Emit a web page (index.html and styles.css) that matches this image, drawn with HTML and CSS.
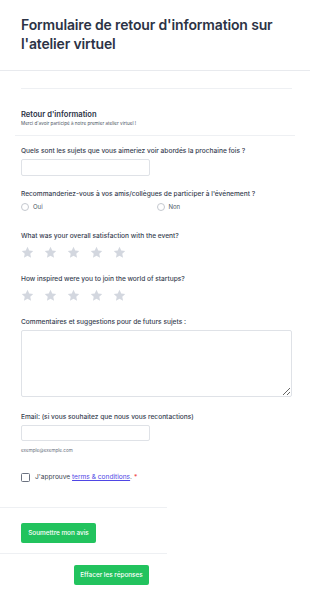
FILE: index.html
```html
<!doctype html>
<html lang="fr">
    <head>
        <meta charset="UTF-8" />
        <meta name="viewport" content="width=device-width, initial-scale=1.0" />
        <title>Formulaire de retour d'information</title>
        <link rel="stylesheet" href="styles.css">
    </head>
    <body>
        <header class="page-header">
            <h1>Formulaire de retour d'information sur l'atelier virtuel</h1>
        </header>

        <form class="form">
            <div class="section-head">
                <h2>Retour d'information</h2>
                <p>Merci d'avoir participé à notre premier atelier virtuel !</p>
            </div>

            <div class="field">
                <label class="field-label">Quels sont les sujets que vous aimeriez voir abordés la prochaine fois ?</label>
                <input type="text" class="input">
            </div>

            <div class="field">
                <label class="field-label">Recommanderiez-vous à vos amis/collègues de participer à l'événement ?</label>
                <div class="radio-group">
                    <label class="radio"><span class="radio-dot"></span>Oui</label>
                    <label class="radio"><span class="radio-dot"></span>Non</label>
                </div>
            </div>

            <div class="field field-rating">
                <label class="field-label">What was your overall satisfaction with the event?</label>
                <div class="stars">
                    <svg viewBox="0 0 24 24"><path d="M12 1.5l3.2 6.9 7.4.8-5.5 5.1 1.5 7.4L12 17.9l-6.6 3.8 1.5-7.4-5.5-5.1 7.4-.8z"/></svg>
                    <svg viewBox="0 0 24 24"><path d="M12 1.5l3.2 6.9 7.4.8-5.5 5.1 1.5 7.4L12 17.9l-6.6 3.8 1.5-7.4-5.5-5.1 7.4-.8z"/></svg>
                    <svg viewBox="0 0 24 24"><path d="M12 1.5l3.2 6.9 7.4.8-5.5 5.1 1.5 7.4L12 17.9l-6.6 3.8 1.5-7.4-5.5-5.1 7.4-.8z"/></svg>
                    <svg viewBox="0 0 24 24"><path d="M12 1.5l3.2 6.9 7.4.8-5.5 5.1 1.5 7.4L12 17.9l-6.6 3.8 1.5-7.4-5.5-5.1 7.4-.8z"/></svg>
                    <svg viewBox="0 0 24 24"><path d="M12 1.5l3.2 6.9 7.4.8-5.5 5.1 1.5 7.4L12 17.9l-6.6 3.8 1.5-7.4-5.5-5.1 7.4-.8z"/></svg>
                </div>
            </div>

            <div class="field field-rating">
                <label class="field-label">How inspired were you to join the world of startups?</label>
                <div class="stars">
                    <svg viewBox="0 0 24 24"><path d="M12 1.5l3.2 6.9 7.4.8-5.5 5.1 1.5 7.4L12 17.9l-6.6 3.8 1.5-7.4-5.5-5.1 7.4-.8z"/></svg>
                    <svg viewBox="0 0 24 24"><path d="M12 1.5l3.2 6.9 7.4.8-5.5 5.1 1.5 7.4L12 17.9l-6.6 3.8 1.5-7.4-5.5-5.1 7.4-.8z"/></svg>
                    <svg viewBox="0 0 24 24"><path d="M12 1.5l3.2 6.9 7.4.8-5.5 5.1 1.5 7.4L12 17.9l-6.6 3.8 1.5-7.4-5.5-5.1 7.4-.8z"/></svg>
                    <svg viewBox="0 0 24 24"><path d="M12 1.5l3.2 6.9 7.4.8-5.5 5.1 1.5 7.4L12 17.9l-6.6 3.8 1.5-7.4-5.5-5.1 7.4-.8z"/></svg>
                    <svg viewBox="0 0 24 24"><path d="M12 1.5l3.2 6.9 7.4.8-5.5 5.1 1.5 7.4L12 17.9l-6.6 3.8 1.5-7.4-5.5-5.1 7.4-.8z"/></svg>
                </div>
            </div>

            <div class="field">
                <label class="field-label">Commentaires et suggestions pour de futurs sujets :</label>
                <textarea class="textarea"></textarea>
            </div>

            <div class="field field-email">
                <label class="field-label">Email: (si vous souhaitez que nous vous recontactions)</label>
                <input type="email" class="input input-email">
                <div class="hint">exemple@exemple.com</div>
            </div>

            <label class="terms">
                <span class="checkbox"></span>
                J'approuve&nbsp;<a href="#">terms &amp; conditions</a>.&nbsp;<span class="required">*</span>
            </label>

            <div class="actions">
                <button type="submit" class="btn">Soumettre mon avis</button>
            </div>
            <div class="actions actions-reset">
                <button type="reset" class="btn">Effacer les réponses</button>
            </div>
        </form>
    </body>
</html>
```

FILE: styles.css
```css
* {
    margin: 0;
    padding: 0;
    box-sizing: border-box;
}

body {
    font-family: Inter, "Noto Sans", sans-serif;
    color: #374151;
    background: #fff;
}

.page-header {
    padding: 15px 18px 17px 21px;
    border-bottom: 1px solid #e8eaee;
}

.page-header h1 {
    font-size: 14px;
    line-height: 19px;
    font-weight: 600;
    letter-spacing: -0.15px;
    color: #2c3345;
}

.form {
    padding: 17px 18px 0 21px;
}

.section-head {
    border-top: 1px solid #eef0f3;
    padding-top: 21px;
}

.section-head h2 {
    font-size: 7.6px;
    line-height: 10px;
    font-weight: 600;
    color: #2c3345;
}

.section-head p {
    font-size: 4.6px;
    line-height: 7px;
    color: #4b5563;
}

.section-head::after {
    content: "";
    display: block;
    height: 1px;
    background: #eef0f3;
    margin: 8px -3px 0 -6px;
}

.field {
    margin-top: 11px;
}

.field + .field {
    margin-top: 14px;
}

.field + .field-rating {
    margin-top: 21px;
}

.field-rating + .field-rating {
    margin-top: 15px;
}

.field-rating + .field {
    margin-top: 16px;
}

.field + .field-email {
    margin-top: 16px;
}

.field-label {
    display: block;
    font-size: 6.6px;
    line-height: 9px;
    font-weight: 500;
    color: #374151;
    margin-bottom: 3px;
}

.input {
    display: block;
    width: 129px;
    height: 17px;
    border: 1px solid #dfe2e7;
    border-radius: 2px;
    background: #fff;
}

.input-email {
    height: 16px;
}

.textarea {
    display: block;
    width: 100%;
    height: 67px;
    border: 1px solid #dfe2e7;
    border-radius: 2px;
    resize: vertical;
}

.hint {
    font-size: 4.6px;
    line-height: 7px;
    color: #6b7280;
    margin-top: 6px;
}

.radio-group {
    display: grid;
    grid-template-columns: 1fr 1fr;
    margin-top: 4px;
}

.radio {
    display: flex;
    align-items: center;
    gap: 4px;
    font-size: 6px;
    line-height: 8px;
    color: #4b5563;
}

.radio-dot {
    width: 8px;
    height: 8px;
    border: 1px solid #c4c8cf;
    border-radius: 50%;
}

.stars {
    display: flex;
    gap: 10px;
    margin-top: 5px;
}

.stars svg {
    width: 13px;
    height: 13px;
    fill: #d3d7df;
}

.terms {
    display: flex;
    align-items: center;
    margin-top: 19px;
    font-size: 6.6px;
    line-height: 9px;
    color: #374151;
}

.checkbox {
    width: 9px;
    height: 9px;
    border: 1px solid #6b7280;
    border-radius: 1.5px;
    margin-right: 5px;
}

.terms a {
    color: #4f46e5;
}

.required {
    color: #ef4444;
}

.actions {
    width: 167px;
    margin-left: -21px;
    margin-top: 25px;
    border-top: 1px solid #eef0f3;
    padding: 11px 0 10px 21px;
}

.actions-reset {
    margin-top: 0;
    padding-top: 7px;
    padding-left: 74px;
}

.btn {
    background: #22c35e;
    color: #fff;
    border: none;
    border-radius: 2px;
    font-family: Inter, "Noto Sans", sans-serif;
    font-size: 6.4px;
    font-weight: 500;
    height: 20px;
    width: 75px;
}
```
